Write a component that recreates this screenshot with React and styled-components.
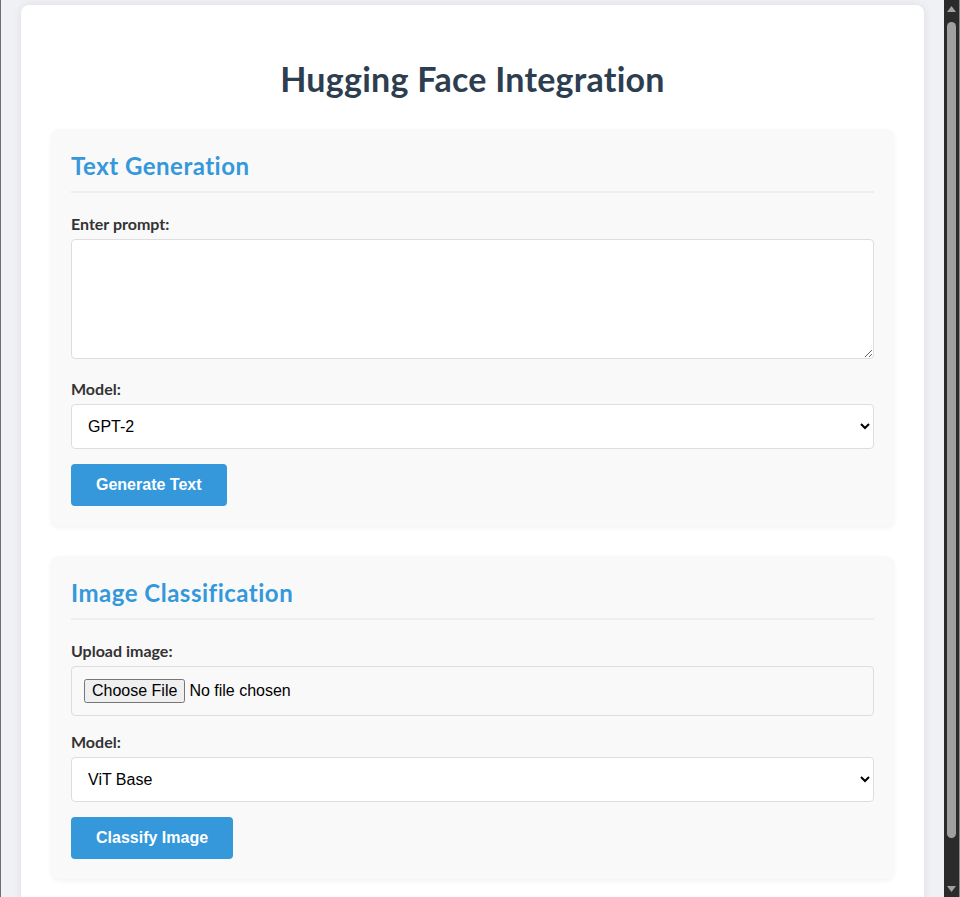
import React, { useState } from "react";
import styled, { createGlobalStyle } from "styled-components";

const GlobalStyle = createGlobalStyle`
  html {
    background-color: #eff1f5;
    border-left: 1px solid #6e6e6e;
  }
  body {
    margin: 0 16px 0 0;
    padding: 5px 20px 20px;
    background-color: #eff1f5;
    font-family: Lato, "Segoe UI", sans-serif;
    color: #333;
  }
  * {
    box-sizing: border-box;
  }
`;

// fake window scrollbar, the reference shows one on the right edge
const ScrollBar = styled.div`
  position: fixed;
  top: 0;
  right: 0;
  width: 16px;
  height: 100vh;
  display: flex;
  flex-direction: column;
  align-items: center;
  background-color: #2b2b2b;
  border-right: 1px solid #8a8a8a;
`;

const ScrollArrow = styled.div`
  flex: 0 0 17px;
  display: flex;
  align-items: center;
  justify-content: center;
`;

const ScrollTrack = styled.div`
  flex: 1;
  width: 100%;
  display: flex;
  justify-content: center;
  padding-top: 5px;
`;

const ScrollThumb = styled.div`
  width: 9px;
  height: 816px;
  border-radius: 5px;
  background-color: #a0a0a0;
`;

const Container = styled.div`
  background-color: #fff;
  border-radius: 8px;
  padding: 30px;
  box-shadow: 0 0 10px rgba(0, 0, 0, 0.08);
`;

const Title = styled.h1`
  margin: 23px 0 29px;
  font-size: 34px;
  line-height: 42px;
  letter-spacing: 0.25px;
  font-weight: 700;
  text-align: center;
  color: #2c3e50;
`;

const Section = styled.section`
  background-color: #f9f9f9;
  border-radius: 8px;
  padding: 20px;
  margin-bottom: 30px;
  box-shadow: 0 2px 5px rgba(0, 0, 0, 0.05);
`;

const SectionTitle = styled.h2`
  margin: 0 0 21px;
  padding-bottom: 8px;
  border-bottom: 2px solid #eee;
  font-size: 24px;
  line-height: 34px;
  letter-spacing: 0.5px;
  font-weight: 700;
  color: #3498db;
`;

const Group = styled.div`
  margin-bottom: ${(p) => p.$gap || 15}px;
`;

const Label = styled.label`
  display: block;
  margin-bottom: 5px;
  font-size: 16px;
  line-height: 20px;
  font-weight: 700;
  color: #333;
`;

const TextArea = styled.textarea`
  display: block;
  width: 100%;
  height: 120px;
  padding: 12px;
  border: 1px solid #ddd;
  border-radius: 4px;
  background: #fff;
  font-family: "Liberation Sans", Arial, sans-serif;
  font-size: 16px;
  resize: vertical;
`;

const Select = styled.select`
  display: block;
  width: 100%;
  height: 45px;
  padding: 0 12px;
  border: 1px solid #ddd;
  border-radius: 4px;
  background-color: #fff;
  color: #000;
  font-family: "Liberation Sans", Arial, sans-serif;
  font-size: 16px;
`;

const FileInput = styled.input`
  display: block;
  width: 100%;
  height: 50px;
  padding: 12px;
  border: 1px solid #ddd;
  border-radius: 4px;
  background-color: #f9f9f9;
  color: #000;
  font-family: "Liberation Sans", Arial, sans-serif;
  font-size: 16px;
`;

const Button = styled.button`
  display: block;
  height: 42px;
  padding: 0 25px;
  border: none;
  border-radius: 4px;
  background-color: #3498db;
  color: #fff;
  font-family: "Liberation Sans", Arial, sans-serif;
  font-size: 16px;
  font-weight: 700;
  cursor: pointer;
`;

const Arrow = ({ down }) => (
  <svg width="9" height="6" viewBox="0 0 9 6">
    <path d={down ? "M0 0 L9 0 L4.5 6 Z" : "M0 6 L9 6 L4.5 0 Z"} fill="#a0a0a0" />
  </svg>
);

const App = () => {
  const [prompt, setPrompt] = useState("");
  const [textModel, setTextModel] = useState("gpt2");
  const [imageModel, setImageModel] = useState("vit");

  return (
    <>
      <GlobalStyle />
      <Container>
        <Title>Hugging Face Integration</Title>

        <Section>
          <SectionTitle>Text Generation</SectionTitle>
          <Group $gap={20}>
            <Label htmlFor="prompt">Enter prompt:</Label>
            <TextArea id="prompt" value={prompt} onChange={(e) => setPrompt(e.target.value)} />
          </Group>
          <Group>
            <Label htmlFor="text-model">Model:</Label>
            <Select id="text-model" value={textModel} onChange={(e) => setTextModel(e.target.value)}>
              <option value="gpt2">GPT-2</option>
              <option value="distilgpt2">DistilGPT-2</option>
            </Select>
          </Group>
          <Button>Generate Text</Button>
        </Section>

        <Section>
          <SectionTitle>Image Classification</SectionTitle>
          <Group $gap={16}>
            <Label htmlFor="image">Upload image:</Label>
            <FileInput id="image" type="file" accept="image/*" />
          </Group>
          <Group>
            <Label htmlFor="image-model">Model:</Label>
            <Select id="image-model" value={imageModel} onChange={(e) => setImageModel(e.target.value)}>
              <option value="vit">ViT Base</option>
              <option value="resnet">ResNet-50</option>
            </Select>
          </Group>
          <Button>Classify Image</Button>
        </Section>
      </Container>

      <ScrollBar>
        <ScrollArrow><Arrow /></ScrollArrow>
        <ScrollTrack><ScrollThumb /></ScrollTrack>
        <ScrollArrow><Arrow down /></ScrollArrow>
      </ScrollBar>
    </>
  );
};

export default App;
